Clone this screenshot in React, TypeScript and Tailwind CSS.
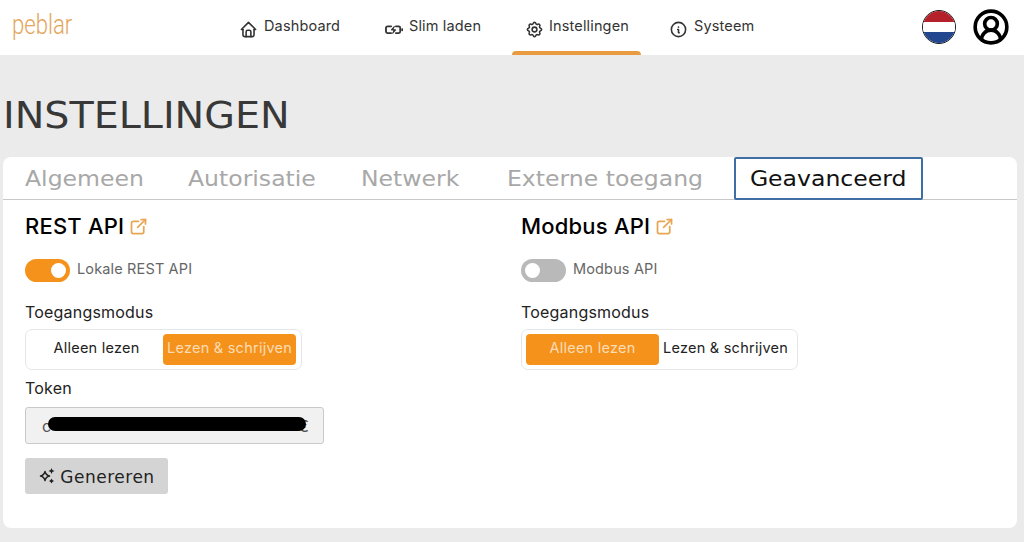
import React from 'react';
import { TbHome, TbSettings, TbInfoCircle, TbExternalLink } from 'react-icons/tb';
import { CircleUserRound } from 'lucide-react';

const WIDE = "font-['DejaVu_Sans',sans-serif]";
const BODY = "font-['Inter','Liberation_Sans',sans-serif]";

function BatteryBolt({ size, className }: { size?: number; className?: string }) {
  return (
    <svg width={size} height={size} className={className} viewBox="0 0 24 24" fill="none" stroke="currentColor" strokeWidth="2.3" strokeLinecap="round" strokeLinejoin="round">
      <path d="M9 8H4.5a2 2 0 0 0-2 2v4.5a2 2 0 0 0 2 2H9" />
      <path d="M15 8h3.5a2 2 0 0 1 2 2v4.5a2 2 0 0 1-2 2H15" />
      <path d="M23 11.5v1.5" />
      <path d="M13 8.5 9.5 12.5h5L11 16.5" fill="currentColor" strokeWidth="1.5" />
    </svg>
  );
}

function Sparkle({ size, className }: { size?: number; className?: string }) {
  return (
    <svg width={size} height={size} className={className} viewBox="0 0 18 18">
      <path d="M7 4.5 C7.6 7.2 8.8 8.4 11.5 9 C8.8 9.6 7.6 10.8 7 13.5 C6.4 10.8 5.2 9.6 2.5 9 C5.2 8.4 6.4 7.2 7 4.5Z" fill="none" stroke="currentColor" strokeWidth="1.5" strokeLinejoin="round" />
      <path d="M13.5 1 L14.4 3.1 L16.5 4 L14.4 4.9 L13.5 7 L12.6 4.9 L10.5 4 L12.6 3.1Z" fill="currentColor" />
      <path d="M13.5 11.5 L14.4 13.1 L16 14 L14.4 14.9 L13.5 16.5 L12.6 14.9 L11 14 L12.6 13.1Z" fill="currentColor" />
    </svg>
  );
}

const NAV = [
  { label: 'Dashboard', icon: TbHome, width: 'w-[145px]', pad: 'pl-0 gap-[6px]' },
  { label: 'Slim laden', icon: BatteryBolt, width: 'w-[127px]', pad: 'pl-0 gap-[6px]' },
  { label: 'Instellingen', icon: TbSettings, width: 'w-[130px]', pad: 'pl-[14px] gap-[5px]', active: true },
  { label: 'Systeem', icon: TbInfoCircle, width: 'w-[130px]', pad: 'pl-[28px] gap-[6px]' },
];

const TABS = [
  { label: 'Algemeen', width: 'w-[163px]' },
  { label: 'Autorisatie', width: 'w-[173px]' },
  { label: 'Netwerk', width: 'w-[146px]' },
  { label: 'Externe toegang', width: 'w-[227px]' },
];

function Toggle({ on, label }: { on: boolean; label: string }) {
  return (
    <div className="flex items-center gap-[7px] h-[23px]">
      <span className={`flex items-center h-[23px] w-[45px] rounded-full px-[4px] ${on ? 'bg-[#f5921b] justify-end' : 'bg-[#b9b9b9] justify-start'}`}>
        <span className="block w-[15px] h-[15px] rounded-full bg-white" />
      </span>
      <span className={`${BODY} text-[14.5px] tracking-[0.15px] text-[#666666] -mt-[4px]`}>{label}</span>
    </div>
  );
}

function Segment({ active }: { active: 0 | 1 }) {
  const options = [{ t: 'Alleen lezen', w: 'w-[133px]' }, { t: 'Lezen & schrijven', w: 'w-[133px]' }];
  return (
    <div className="flex items-center w-[277px] h-[41px] mt-[7px] px-[4px] bg-white border border-[#e4e7ea] rounded-[7px]">
      {options.map((o, i) => (
        <span
          key={o.t}
          className={`${o.w} h-[31px] pb-[4px] flex items-center justify-center rounded-[4px] ${BODY} text-[14.5px] tracking-[0.25px] whitespace-nowrap ${i === active ? 'bg-[#f5921b] text-[#fbdcb4]' : 'text-[#222222]'}`}
        >
          {o.t}
        </span>
      ))}
    </div>
  );
}

function ApiHeading({ title }: { title: string }) {
  return (
    <div className="flex items-center gap-[4px] h-[26px]">
      <h2 className={`${BODY} text-[22px] font-medium text-black tracking-[0.2px] leading-none`}>{title}</h2>
      <TbExternalLink className="text-[#e8a552]" size={21} />
    </div>
  );
}

export default function App() {
  return (
    <div className="w-[1024px] h-[542px] overflow-hidden bg-[#ebebeb] flex flex-col">
      <header className="h-[55px] bg-white flex items-stretch shrink-0">
        <div className="w-[240px] pl-[12px] flex items-center">
          <span className="font-['Roboto',sans-serif] font-light text-[27px] leading-none text-[#e3a65c] -mt-[5px] inline-block origin-left scale-x-[0.82]">peblar</span>
        </div>
        <nav className="flex items-stretch flex-1 -ml-[1px]">
          {NAV.map(({ label, icon: Icon, width, pad, active }) => (
            <div key={label} className={`${width} ${pad} relative flex items-center text-[#333333]`}>
              <Icon size={19} className="mt-[4px] shrink-0" />
              <span className={`${BODY} text-[14.5px] tracking-[0.15px] -mt-[4px] whitespace-nowrap`}>{label}</span>
              {active && <span className="absolute left-[1px] right-0 bottom-0 h-[4px] rounded-t bg-[#e89c3f]" />}
            </div>
          ))}
        </nav>
        <div className="flex items-center gap-[17px] pr-[16px] pb-[1px]">
          <div className="w-[34px] h-[34px] rounded-full overflow-hidden border border-[#1a1a1a] flex flex-col">
            <span className="flex-1 bg-[#b5212b]" />
            <span className="flex-1 bg-white" />
            <span className="flex-1 bg-[#23478f]" />
          </div>
          <CircleUserRound size={38} strokeWidth={2.3} className="text-black -mx-[1.5px]" />
        </div>
      </header>

      <main className="flex-1 pl-[3px] pr-[7px]">
        <h1 className={`${WIDE} text-[38px] leading-none text-[#383838] mt-[41px] h-[61px] whitespace-nowrap origin-left scale-x-[1.043]`}>INSTELLINGEN</h1>
        <section className="h-[371px] bg-white rounded-[8px] flex flex-col">
          <div className="h-[43px] flex items-stretch pl-[22px] border-b border-[#c8c8c8] shrink-0">
            {TABS.map(t => (
              <div key={t.label} className={`${t.width} flex items-center pt-[1px]`}>
                <span className={`${WIDE} text-[22px] text-[#a8a8a8] whitespace-nowrap origin-left scale-x-[1.07]`}>{t.label}</span>
              </div>
            ))}
            <div className="w-[189px] h-[43px] border-2 border-[#3f6ea5] rounded-[2px] flex items-center justify-center">
              <span className={`${WIDE} text-[22px] text-[#111111] whitespace-nowrap scale-x-[1.07]`}>Geavanceerd</span>
            </div>
          </div>

          <div className="flex pl-[22px] pt-[13px]">
            <div className="w-[496px]">
              <ApiHeading title="REST API" />
              <div className="mt-[20px]">
                <Toggle on label="Lokale REST API" />
              </div>
              <div className={`${BODY} text-[16px] tracking-[0.2px] text-[#222222] mt-[20px] leading-[20px]`}>Toegangsmodus</div>
              <Segment active={1} />
              <div className={`${BODY} text-[16px] tracking-[0.2px] text-[#222222] mt-[8px] leading-[20px]`}>Token</div>
              <div className="relative mt-[9px] w-[299px] h-[37px] bg-[#f1f1f1] border border-[#c9c9c9] rounded-[3px] flex items-center justify-between pl-[16px] pr-[14px]">
                <span className={`${BODY} text-[16px] text-[#555555]`}>c</span>
                <span className={`${BODY} text-[16px] text-[#555555]`}>€</span>
                <span className="absolute left-[22px] top-[9px] w-[258px] h-[14px] rounded-full bg-black" />
              </div>
              <button className={`mt-[14px] w-[143px] h-[36px] bg-[#d4d4d4] rounded-[3px] flex items-center justify-center gap-[4px] text-[#222222]`}>
                <Sparkle size={18} />
                <span className={`${WIDE} text-[17px] tracking-[0.5px] pt-[3px]`}>Genereren</span>
              </button>
            </div>
            <div>
              <ApiHeading title="Modbus API" />
              <div className="mt-[20px]">
                <Toggle on={false} label="Modbus API" />
              </div>
              <div className={`${BODY} text-[16px] tracking-[0.2px] text-[#222222] mt-[20px] leading-[20px]`}>Toegangsmodus</div>
              <Segment active={0} />
            </div>
          </div>
        </section>
      </main>
    </div>
  );
}
